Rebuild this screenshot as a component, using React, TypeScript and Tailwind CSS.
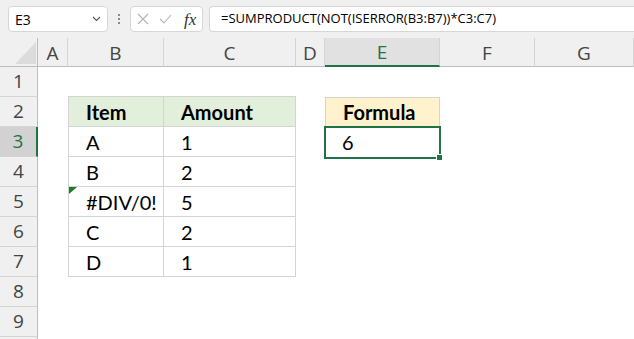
import { Fragment } from "react";

const ui = "font-['Open_Sans','Noto_Sans',sans-serif]";
const cellFont = "font-['Lato','Liberation_Sans',sans-serif] text-[20px] text-black";

const cols = ["A", "B", "C", "D", "E", "F", "G"];

type Cell = { text?: string; cls?: string; bold?: boolean };

function cellFor(row: number, col: string): Cell {
    const data: Record<number, [string, string]> = {
        2: ["Item", "Amount"],
        3: ["A", "1"],
        4: ["B", "2"],
        5: ["#DIV/0!", "5"],
        6: ["C", "2"],
        7: ["D", "1"],
    };
    if (row >= 2 && row <= 7 && (col === "B" || col === "C")) {
        const [b, c] = data[row];
        return {
            text: col === "B" ? b : c,
            bold: row === 2,
            cls:
                "border-b border-r border-[#d4d4d4] " +
                (row === 2 ? "bg-[#e2efda] " : "bg-white ") +
                (col === "B" ? "border-l " : ""),
        };
    }
    if (row === 1 && (col === "B" || col === "C")) return { cls: "border-b border-[#d4d4d4] bg-white" };
    if (row === 2 && col === "E")
        return { text: "Formula", bold: true, cls: "bg-[#fff2cc] border border-[#d4d4d4]" };
    if (row === 3 && col === "E") return { text: "6", cls: "bg-white z-10" };
    return { cls: "bg-white" };
}

function FormulaBar() {
    return (
        <div className={`flex h-[38px] items-start bg-[#f0f0f0] pt-[6px] ${ui}`}>
            <div className="ml-[8px] flex h-[26px] w-[100px] items-center justify-between rounded-[4px] border border-[#d6d6d6] bg-white pl-[6px] pr-[6px]">
                <span className="text-[14px] text-black">E3</span>
                <svg width="9" height="6" viewBox="0 0 9 6">
                    <path d="M1 1 L4.5 4.5 L8 1" fill="none" stroke="#555" strokeWidth="1.1" />
                </svg>
            </div>
            <div className="flex h-[26px] w-[22px] flex-col items-center justify-center gap-[2px]">
                <span className="h-[2px] w-[2px] bg-[#8a8a8a]" />
                <span className="h-[2px] w-[2px] bg-[#8a8a8a]" />
                <span className="h-[2px] w-[2px] bg-[#8a8a8a]" />
            </div>
            <div className="flex h-[26px] w-[73px] items-center rounded-[4px] border border-[#d6d6d6] bg-white pl-[6px]">
                <svg width="12" height="12" viewBox="0 0 12 12">
                    <path d="M1 1 L11 11 M11 1 L1 11" stroke="#b4b4b4" strokeWidth="1.1" fill="none" />
                </svg>
                <svg className="ml-[10px]" width="13" height="10" viewBox="0 0 13 10">
                    <path d="M1 5 L5 9 L12 1" stroke="#b4b4b4" strokeWidth="1.1" fill="none" />
                </svg>
                <span className="ml-[12px] font-['Liberation_Serif',serif] text-[17px] italic leading-none text-[#333]">
                    fx
                </span>
            </div>
            <div className="ml-[6px] flex h-[26px] flex-1 items-center rounded-l-[4px] border border-r-0 border-[#d6d6d6] bg-white pl-[11px]">
                <span className="whitespace-nowrap text-[13px] text-black">
                    =SUMPRODUCT(NOT(ISERROR(B3:B7))*C3:C7)
                </span>
            </div>
        </div>
    );
}

export default function App() {
    const rows = [1, 2, 3, 4, 5, 6, 7, 8, 9, 10];
    return (
        <div className="h-[339px] w-[634px] overflow-hidden bg-white">
            <FormulaBar />
            <div className="grid grid-cols-[38px_30px_96px_132px_29px_115px_95px_99px] grid-rows-[29px_repeat(10,30px)]">
                <div className="relative border-b border-r border-[#bdbdbd] bg-[#f0f0f0]">
                    <svg className="absolute left-[15px] top-[4px]" width="21" height="22" viewBox="0 0 21 22">
                        <path d="M21 0 L21 22 L0 22 Z" fill="#dcdcdc" />
                    </svg>
                </div>
                {cols.map((c) => (
                    <div
                        key={c}
                        className={`flex items-center justify-center border-r border-[#d4d4d4] text-[19px] ${ui} ${
                            c === "E"
                                ? "border-b-2 border-b-[#217346] bg-[#e1e1e1] text-[#217346]"
                                : "border-b border-b-[#bdbdbd] bg-[#f0f0f0] text-[#444]"
                        }`}
                    >
                        <span className="pt-[2px]">{c}</span>
                    </div>
                ))}

                {rows.map((r) => (
                    <Fragment key={r}>
                        <div
                            className={`flex items-center justify-center border-b border-[#d4d4d4] text-[19px] ${ui} ${
                                r === 3
                                    ? "border-r-2 border-r-[#217346] bg-[#d2d2d2] text-[#217346]"
                                    : "border-r border-r-[#bdbdbd] bg-[#f0f0f0] text-[#444]"
                            }`}
                        >
                            {r < 10 ? r : ""}
                        </div>
                        {cols.map((c) => {
                            const cell = cellFor(r, c);
                            return (
                                <div
                                    key={`${c}${r}`}
                                    className={`relative flex items-center pl-[17px] ${cellFont} ${cell.bold ? "font-bold" : ""} ${cell.cls ?? ""}`}
                                >
                                    {c === "B" && r === 5 && (
                                        <svg className="absolute left-0 top-0" width="8" height="7" viewBox="0 0 8 7">
                                            <path d="M0 0 L8 0 L0 7 Z" fill="#1e7d22" />
                                        </svg>
                                    )}
                                    {cell.text}
                                    {c === "E" && r === 3 && (
                                        <>
                                            <div className="absolute -bottom-[2px] -left-[1px] -right-[1px] -top-[1px] border-2 border-[#217346]" />
                                            <div className="absolute -bottom-[4px] -right-[3px] h-[7px] w-[7px] border border-white bg-[#217346]" />
                                        </>
                                    )}
                                </div>
                            );
                        })}
                    </Fragment>
                ))}
            </div>
        </div>
    );
}
